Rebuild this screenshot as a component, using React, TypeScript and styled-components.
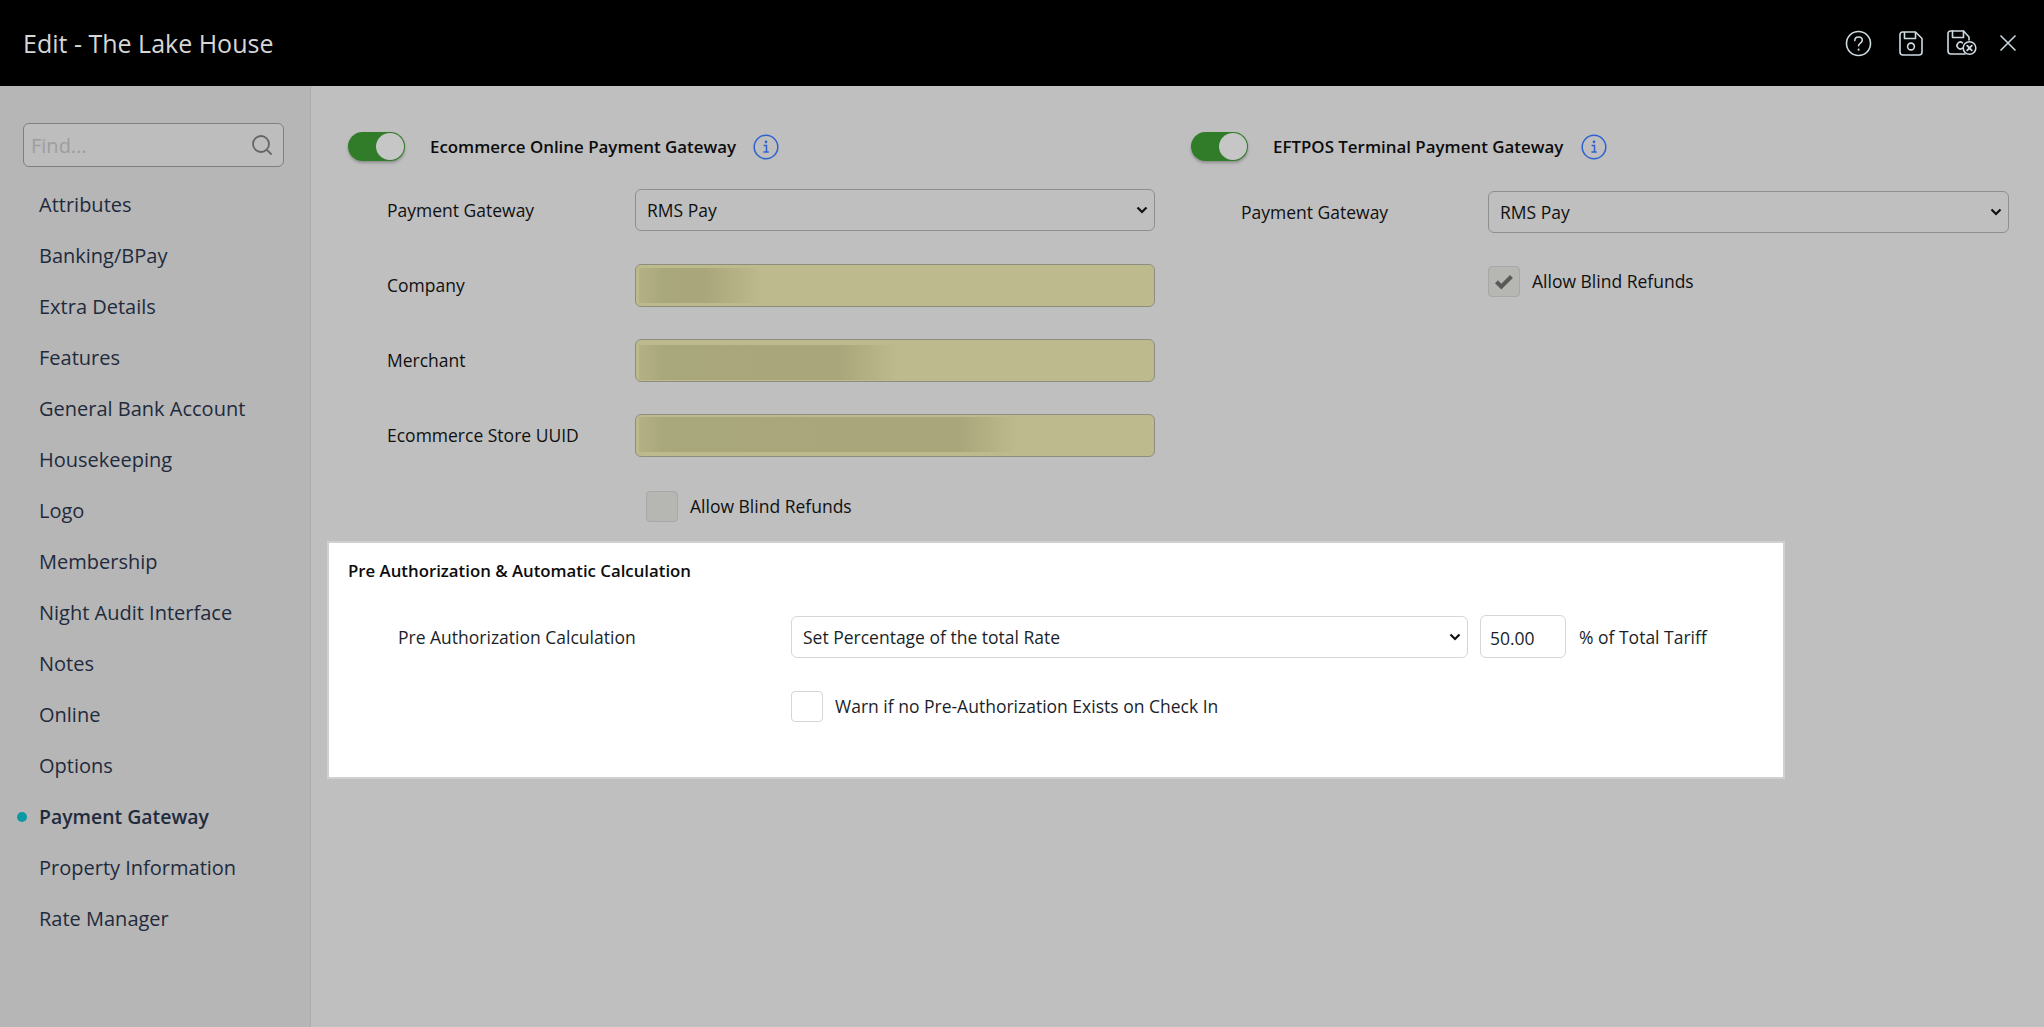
import React from "react";
import styled, { createGlobalStyle } from "styled-components";
import { Search } from "lucide-react";

const GlobalStyle = createGlobalStyle`
  html, body {
    margin: 0;
    height: 100%;
    background: #bfbfbf;
    font-family: "Open Sans", "Liberation Sans", sans-serif;
  }
  * {
    box-sizing: border-box;
  }
`;

const NAV_ITEMS = [
  "Attributes",
  "Banking/BPay",
  "Extra Details",
  "Features",
  "General Bank Account",
  "Housekeeping",
  "Logo",
  "Membership",
  "Night Audit Interface",
  "Notes",
  "Online",
  "Options",
  "Payment Gateway",
  "Property Information",
  "Rate Manager",
];

const CHEVRON =
  "url(\"data:image/svg+xml,%3Csvg xmlns='http://www.w3.org/2000/svg' width='12' height='8' viewBox='0 0 12 8'%3E%3Cpath d='M1.5 1.500 6 6l4.500-4.500' fill='none' stroke='%23111' stroke-width='2.200'/%3E%3C/svg%3E\")";

const Page = styled.div`
  display: flex;
  flex-direction: column;
  height: 1027px;
  overflow: hidden;
`;

const Header = styled.header`
  display: flex;
  align-items: center;
  justify-content: space-between;
  flex: 0 0 86px;
  padding: 0 21px 0 23px;
  background: #000;
`;

const Title = styled.h1`
  margin: 0;
  font-size: 25px;
  font-weight: 400;
  color: #d6d6d6;
`;

const HeaderTools = styled.div`
  display: flex;
  align-items: center;
  color: #cfdbe2;
`;

const ToolSlot = styled.span<{ $gap: number }>`
  display: flex;
  justify-content: center;
  width: 30px;
  margin-left: ${(p) => p.$gap}px;
`;

const Body = styled.div`
  display: flex;
  flex: 1;
  min-height: 0;
`;

const Sidebar = styled.aside`
  flex: 0 0 311px;
  min-width: 0;
  padding: 37px 26px 0 23px;
  background: #b6b6b6;
  border-right: 1px solid #adadad;
`;

const SearchBox = styled.div`
  display: flex;
  align-items: center;
  height: 44px;
  padding: 0 9px 0 7px;
  background: #bdbdbd;
  border: 1px solid #7f7f7f;
  border-radius: 6px;
  color: #666;
`;

const SearchInput = styled.input`
  flex: 1;
  width: 100%;
  min-width: 0;
  padding: 0;
  background: transparent;
  border: 0;
  outline: 0;
  font: 400 20px "Open Sans", sans-serif;

  &::placeholder {
    color: #9d9d9d;
    opacity: 1;
  }
`;

const NavList = styled.ul`
  margin: 12px 0 0;
  padding: 0;
  list-style: none;
`;

const NavItem = styled.li<{ $active?: boolean }>`
  position: relative;
  display: flex;
  align-items: center;
  height: 51px;
  padding-left: 16px;
  font-size: ${(p) => (p.$active ? 19.4 : 20)}px;
  font-weight: ${(p) => (p.$active ? 600 : 400)};
  color: #1f2b3d;

  ${(p) =>
    p.$active &&
    `&::before {
      content: "";
      position: absolute;
      left: -6px;
      top: 21px;
      width: 10px;
      height: 10px;
      border-radius: 50%;
      background: #0b9aa3;
    }`}
`;

const Main = styled.main`
  flex: 1;
  min-width: 0;
  padding: 46px 35px 0 16px;
`;

const Gateways = styled.div`
  display: grid;
  grid-template-columns: 807px 1fr;
  column-gap: 36px;
  padding-left: 21px;
`;

const GatewayColumn = styled.section`
  display: flex;
  flex-direction: column;
  align-items: stretch;
  min-width: 0;
`;

const GatewayHead = styled.div`
  display: flex;
  align-items: center;
  height: 29px;
`;

const Toggle = styled.span`
  display: flex;
  justify-content: flex-end;
  align-items: center;
  width: 57px;
  height: 29px;
  padding-right: 1px;
  border-radius: 15px;
  background: #317c29;
  box-shadow: 0 2px 3px rgba(0, 0, 0, 0.25);

  &::after {
    content: "";
    width: 28px;
    height: 27px;
    border-radius: 50%;
    background: #c6c6c6;
  }
`;

const GatewayName = styled.strong`
  margin-left: 25px;
  font-size: 16.9px;
  font-weight: 600;
  color: #0c0c0c;
`;

const InfoSlot = styled.span<{ $gap: number }>`
  display: flex;
  margin-left: ${(p) => p.$gap}px;
  color: #2f62d0;
`;

const FieldStack = styled.div<{ $top: number; $indent: number; $labelWidth: number }>`
  display: grid;
  grid-template-columns: ${(p) => p.$labelWidth}px 1fr;
  grid-auto-rows: 43px;
  row-gap: 32px;
  align-items: center;
  margin-top: ${(p) => p.$top}px;
  padding-left: ${(p) => p.$indent}px;
`;

const FieldLabel = styled.label`
  padding-bottom: 2px;
  font-size: 17.5px;
  color: #101010;
`;

const Select = styled.select<{ $light?: boolean }>`
  appearance: none;
  align-self: ${(p) => (p.$light ? "end" : "start")};
  width: 100%;
  height: 42px;
  padding: 0 6px 0 11px;
  font: 400 17.5px "Open Sans", sans-serif;
  color: ${(p) => (p.$light ? "#1b1f2a" : "#101010")};
  background-color: ${(p) => (p.$light ? "#fff" : "#bfbfbf")};
  background-image: ${CHEVRON};
  background-repeat: no-repeat;
  background-position: right 6px center;
  border: 1px solid ${(p) => (p.$light ? "#d6d6d6" : "#8f8f8f")};
  border-radius: 6px;
`;

const AutofillField = styled.div`
  height: 43px;
  padding: 3px;
  background: #bdbb8d;
  border: 1px solid #8e8e80;
  border-radius: 6px;
`;

const Redaction = styled.div<{ $width: number; $shift: number }>`
  width: ${(p) => p.$width}px;
  height: 35px;
  margin-top: ${(p) => p.$shift}px;
  background: linear-gradient(
    90deg,
    #b3b184 0,
    #a9a77c 24px,
    #a9a67b calc(100% - 58px),
    #bdbb8d 100%
  );
`;

const CheckRow = styled.div<{ $top: number; $indent: number }>`
  display: flex;
  align-items: center;
  gap: 12px;
  margin-top: ${(p) => p.$top}px;
  margin-left: ${(p) => p.$indent}px;
  font-size: 17.5px;
  color: #101010;
`;

const CheckText = styled.span`
  padding-bottom: 1px;
`;

const CheckBox = styled.span<{ $light?: boolean }>`
  display: flex;
  align-items: center;
  justify-content: center;
  flex: 0 0 32px;
  height: 31px;
  color: #5a5a5a;
  background: ${(p) => (p.$light ? "#fff" : "#b6b6b2")};
  border: 1px solid ${(p) => (p.$light ? "#d6d6d6" : "#a8a8a8")};
  border-radius: 4px;
`;

const Spotlight = styled.section`
  width: 1458px;
  height: 238px;
  margin-top: 19px;
  padding: 16px 19px 0;
  background: #fff;
  border: 2px solid #d0d0d0;
`;

const SpotlightTitle = styled.h2`
  margin: 0;
  font-size: 16.8px;
  font-weight: 600;
  line-height: 24px;
  color: #0c0c0c;
`;

const CalcGrid = styled.div`
  display: grid;
  grid-template-columns: 393px 677px 86px auto;
  row-gap: 33px;
  align-items: center;
  margin-top: 32px;
  padding-left: 50px;
  font-size: 17.5px;
  color: #1b1f2a;
`;

const CalcLabel = styled.label``;

const AmountInput = styled.input`
  width: 86px;
  height: 43px;
  margin-left: 12px;
  padding: 2px 9px 0;
  font: 400 17.5px "Open Sans", sans-serif;
  color: #1b1f2a;
  background: #fff;
  border: 1px solid #d6d6d6;
  border-radius: 6px;
  outline: 0;
`;

const AmountUnit = styled.span`
  margin-left: 25px;
  white-space: nowrap;
`;

const CalcCheck = styled(CheckRow)`
  grid-column: 2 / -1;
  color: #1b1f2a;
`;

const HelpIcon = () => (
  <svg width="27" height="27" viewBox="0 0 27 27" fill="none" stroke="currentColor" strokeWidth="1.6" strokeLinecap="round">
    <circle cx="13.500" cy="13.500" r="12" />
    <path d="M9.800 10.600c0-2.200 1.700-3.600 3.800-3.600s3.700 1.300 3.700 3.200c0 2.900-3.700 2.800-3.700 5.600" />
    <path d="M13.600 19.400v.4" strokeWidth="2" />
  </svg>
);

const SaveIcon = () => (
  <svg width="24" height="25" viewBox="0 0 24 25" fill="none" stroke="currentColor" strokeWidth="1.6" strokeLinejoin="round">
    <path d="M3.500 1h13L23 7.500V21a3 3 0 0 1-3 3H4a3 3 0 0 1-3-3V3.500A2.500 2.500 0 0 1 3.500 1Z" />
    <path d="M5.500 1v6.500h11V1" />
    <circle cx="12" cy="15.500" r="3.400" />
  </svg>
);

const SaveCloseIcon = () => (
  <svg width="30" height="26" viewBox="0 0 30 26" fill="none" stroke="currentColor" strokeWidth="1.6" strokeLinejoin="round" strokeLinecap="round">
    <path d="M18 24H4a3 3 0 0 1-3-3V3.500A2.500 2.500 0 0 1 3.500 1h13L22 7v3" />
    <path d="M5.500 1v6.500h11V1" />
    <path d="M15.500 12.800a3.400 3.400 0 1 0 0 5.400" />
    <circle cx="22.500" cy="18" r="6.300" />
    <path d="M20.200 15.700l4.600 4.600M24.800 15.700l-4.600 4.600" strokeWidth="1.800" />
  </svg>
);

const CloseIcon = () => (
  <svg width="18" height="18" viewBox="0 0 18 18" fill="none" stroke="currentColor" strokeWidth="1.5">
    <path d="M1.500 1.500l15 15M16.500 1.500l-15 15" />
  </svg>
);

const InfoIcon = () => (
  <svg width="26" height="26" viewBox="0 0 26 26" fill="none" stroke="currentColor" strokeWidth="1.5">
    <circle cx="13" cy="13" r="11.800" />
    <path d="M10.600 11.400h2.900v6.300M10.400 18h5.400" />
    <circle cx="13" cy="7.900" r="1.300" fill="currentColor" stroke="none" />
  </svg>
);

const CheckIcon = () => (
  <svg width="20" height="16" viewBox="0 0 20 16" fill="currentColor">
    <path d="M7.300 15.500 1 9.200l2.900-2.900 3.400 3.400L16 1l2.900 2.900Z" />
  </svg>
);

const App = () => {
  return (
    <Page>
      <GlobalStyle />
      <Header>
        <Title>Edit - The Lake House</Title>
        <HeaderTools>
          <ToolSlot $gap={0}><HelpIcon /></ToolSlot>
          <ToolSlot $gap={23}><SaveIcon /></ToolSlot>
          <ToolSlot $gap={21}><SaveCloseIcon /></ToolSlot>
          <ToolSlot $gap={16}><CloseIcon /></ToolSlot>
        </HeaderTools>
      </Header>
      <Body>
        <Sidebar>
          <SearchBox>
            <SearchInput placeholder="Find..." />
            <Search size={24} strokeWidth={1.8} />
          </SearchBox>
          <NavList>
            {NAV_ITEMS.map((item) => (
              <NavItem key={item} $active={item === "Payment Gateway"}>
                {item}
              </NavItem>
            ))}
          </NavList>
        </Sidebar>
        <Main>
          <Gateways>
            <GatewayColumn>
              <GatewayHead>
                <Toggle />
                <GatewayName>Ecommerce Online Payment Gateway</GatewayName>
                <InfoSlot $gap={17}><InfoIcon /></InfoSlot>
              </GatewayHead>
              <FieldStack $top={28} $indent={39} $labelWidth={248}>
                <FieldLabel>Payment Gateway</FieldLabel>
                <Select defaultValue="RMS Pay">
                  <option>RMS Pay</option>
                </Select>
                <FieldLabel>Company</FieldLabel>
                <AutofillField><Redaction $width={123} $shift={0} /></AutofillField>
                <FieldLabel>Merchant</FieldLabel>
                <AutofillField><Redaction $width={258} $shift={2} /></AutofillField>
                <FieldLabel>Ecommerce Store UUID</FieldLabel>
                <AutofillField><Redaction $width={378} $shift={-1} /></AutofillField>
              </FieldStack>
              <CheckRow $top={34} $indent={298}>
                <CheckBox />
                <CheckText>Allow Blind Refunds</CheckText>
              </CheckRow>
            </GatewayColumn>
            <GatewayColumn>
              <GatewayHead>
                <Toggle />
                <GatewayName>EFTPOS Terminal Payment Gateway</GatewayName>
                <InfoSlot $gap={18}><InfoIcon /></InfoSlot>
              </GatewayHead>
              <FieldStack $top={30} $indent={50} $labelWidth={247}>
                <FieldLabel>Payment Gateway</FieldLabel>
                <Select defaultValue="RMS Pay">
                  <option>RMS Pay</option>
                </Select>
              </FieldStack>
              <CheckRow $top={32} $indent={297}>
                <CheckBox><CheckIcon /></CheckBox>
                <CheckText>Allow Blind Refunds</CheckText>
              </CheckRow>
            </GatewayColumn>
          </Gateways>
          <Spotlight>
            <SpotlightTitle>Pre Authorization &amp; Automatic Calculation</SpotlightTitle>
            <CalcGrid>
              <CalcLabel>Pre Authorization Calculation</CalcLabel>
              <Select $light defaultValue="Set Percentage of the total Rate">
                <option>Set Percentage of the total Rate</option>
              </Select>
              <AmountInput defaultValue="50.00" />
              <AmountUnit>% of Total Tariff</AmountUnit>
              <CalcCheck $top={0} $indent={0}>
                <CheckBox $light />
                <CheckText>Warn if no Pre-Authorization Exists on Check In</CheckText>
              </CalcCheck>
            </CalcGrid>
          </Spotlight>
        </Main>
      </Body>
    </Page>
  );
};

export default App;
